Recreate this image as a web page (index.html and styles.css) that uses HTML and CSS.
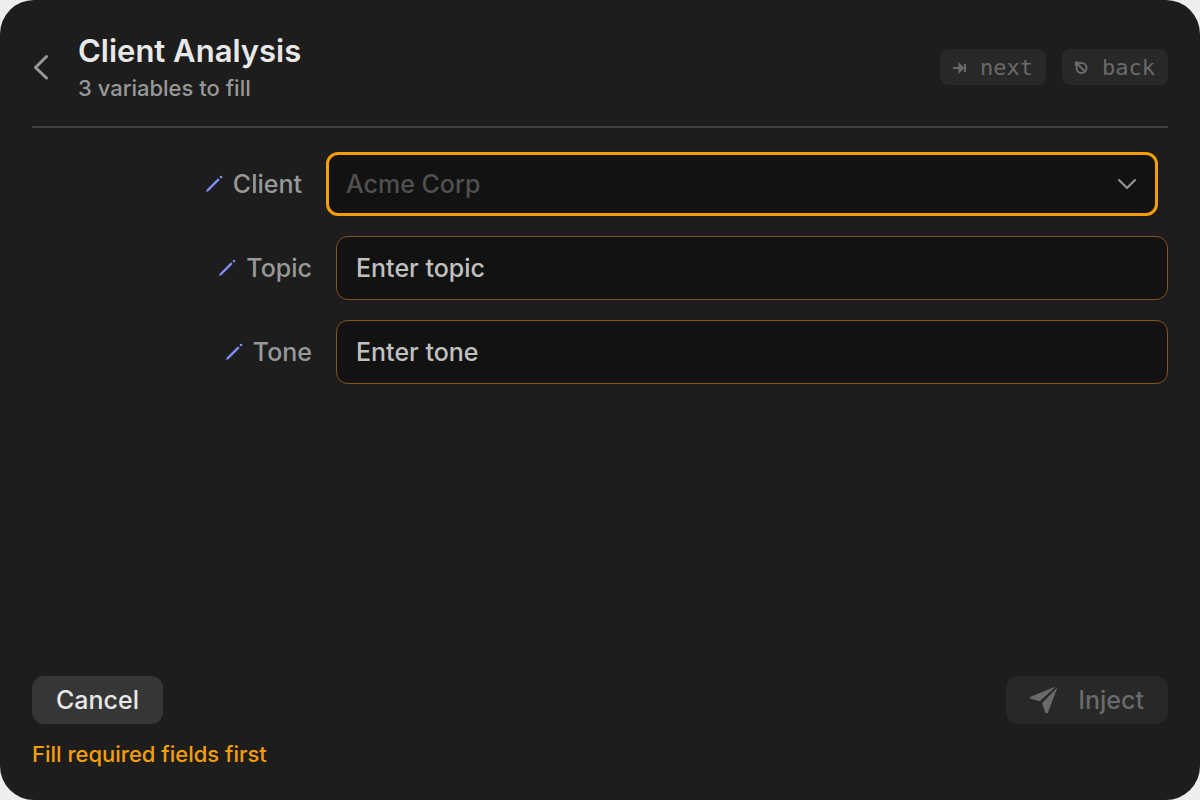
FILE: index.html
```html
<!DOCTYPE html>
<html lang="en">
<head>
  <meta charset="UTF-8">
  <meta name="viewport" content="width=device-width, initial-scale=1">
  <title>Client Analysis</title>
  <link rel="stylesheet" href="styles.css">
</head>
<body>
  <form class="panel">
    <header class="header">
      <button type="button" class="back" aria-label="Back">
        <svg width="18" height="28" viewBox="0 0 18 28"><path d="M14.500 3.500L3.500 14.500l11 10.500"/></svg>
      </button>
      <div class="heading">
        <h1>Client Analysis</h1>
        <p>3 variables to fill</p>
      </div>
      <div class="hints">
        <span class="hint">
          <svg width="13" height="14" viewBox="0 0 13 14"><path d="M0 8h10M6.500 4.500L10 8l-3.500 3.500zM12 4v8"/></svg>
          next
        </span>
        <span class="hint">
          <svg width="13" height="14" viewBox="0 0 13 14"><circle cx="6.500" cy="8" r="5"/><path d="M1 2.500l9 9M1 6V2.500h3"/></svg>
          back
        </span>
      </div>
    </header>

    <main class="fields">
      <div class="row active">
        <label for="client">
          <svg class="pencil" width="18" height="18" viewBox="0 0 18 18"><path d="M1 17l1-2.700L13 3.300 14.700 5 3.700 16z"/><circle cx="16" cy="2" r="1.300"/></svg>
          Client
        </label>
        <div class="dropdown">
          <select id="client">
            <option>Acme Corp</option>
          </select>
          <svg class="chevron" width="20" height="12" viewBox="0 0 20 12"><path d="M2 2l8 8 8-8"/></svg>
        </div>
      </div>
      <div class="row">
        <label for="topic">
          <svg class="pencil" width="18" height="18" viewBox="0 0 18 18"><path d="M1 17l1-2.700L13 3.300 14.700 5 3.700 16z"/><circle cx="16" cy="2" r="1.300"/></svg>
          Topic
        </label>
        <input type="text" id="topic" placeholder="Enter topic">
      </div>
      <div class="row">
        <label for="tone">
          <svg class="pencil" width="18" height="18" viewBox="0 0 18 18"><path d="M1 17l1-2.700L13 3.300 14.700 5 3.700 16z"/><circle cx="16" cy="2" r="1.300"/></svg>
          Tone
        </label>
        <input type="text" id="tone" placeholder="Enter tone">
      </div>
    </main>

    <footer class="footer">
      <div class="actions">
        <button type="button" class="btn">Cancel</button>
        <button type="submit" class="btn inject" disabled>
          <svg width="28" height="28" viewBox="0 0 28 28"><path d="M0.500 10.800L25.800 0.500 9.800 15.300 1.200 13Q-0.500 11.800 0.500 10.800z"/><path d="M27.500 1.300L18 26.500Q16.500 28.200 15.300 26.500L12 17.300z"/></svg>
          Inject
        </button>
      </div>
      <p class="warning">Fill required fields first</p>
    </footer>
  </form>
</body>
</html>
```

FILE: styles.css
```css
* {
  box-sizing: border-box;
}
body {
  margin: 0;
  background: #eeeeee;
  font-family: Inter, "Liberation Sans", sans-serif;
  font-weight: 500;
  color: #e8e8e8;
}
h1, p {
  margin: 0;
}
button, input, select {
  font-family: inherit;
  font-weight: inherit;
}
.panel {
  display: flex;
  flex-direction: column;
  min-height: 100vh;
  padding: 32px;
  background: #1d1d1d;
  border-radius: 34px;
}

/* Header */
.header {
  display: flex;
  align-items: center;
  padding-bottom: 24px;
  border-bottom: 2px solid #404040;
}
.back {
  display: flex;
  padding: 0;
  margin-right: 28px;
  border: none;
  background: none;
  cursor: pointer;
}
.back svg {
  fill: none;
  stroke: #989898;
  stroke-width: 3;
  stroke-linecap: round;
  stroke-linejoin: round;
}
.heading {
  flex: 1;
}
.heading h1 {
  font-size: 31px;
  font-weight: 600;
  line-height: 38px;
}
.heading p {
  margin-top: 4px;
  font-size: 22px;
  line-height: 28px;
  color: #989898;
}
.hints {
  display: flex;
  gap: 16px;
}
.hint {
  display: flex;
  align-items: center;
  gap: 14px;
  height: 36px;
  padding: 0 13px;
  border-radius: 8px;
  background: #282828;
  color: #6a6a6a;
  font-family: "DejaVu Sans Mono", monospace;
  font-size: 22px;
}
.hint svg {
  fill: none;
  stroke: currentColor;
  stroke-width: 2;
}

/* Fields */
.fields {
  display: flex;
  flex: 1;
  flex-direction: column;
  gap: 20px;
  padding-top: 24px;
}
.row {
  display: grid;
  grid-template-columns: 280px 1fr;
  gap: 24px;
  align-items: center;
}
.row.active {
  margin: 0 10px 0 -10px;
}
label {
  display: flex;
  align-items: center;
  justify-content: flex-end;
  gap: 10px;
  font-size: 25px;
  color: #989898;
}
.pencil {
  fill: #818cf8;
}
input, select {
  width: 100%;
  height: 64px;
  padding: 0 19px;
  border: 1px solid #83561a;
  border-radius: 12px;
  outline: none;
  background: #121212;
  color: #e8e8e8;
  font-size: 25px;
}
input::placeholder {
  color: #c0c0c0;
  opacity: 1;
}
.dropdown {
  position: relative;
}
.dropdown select {
  padding: 0 17px;
  border: 3px solid #f59e0b;
  color: #505050;
  appearance: none;
}
.chevron {
  position: absolute;
  top: 26px;
  right: 21px;
  fill: none;
  stroke: #989898;
  stroke-width: 2;
  stroke-linecap: round;
  stroke-linejoin: round;
  pointer-events: none;
}

/* Footer */
.actions {
  display: flex;
  align-items: center;
  justify-content: space-between;
}
.btn {
  display: flex;
  align-items: center;
  gap: 20px;
  height: 48px;
  padding: 0 24px;
  border: none;
  border-radius: 12px;
  background: #363636;
  color: #e8e8e8;
  font-size: 25px;
}
.btn.inject {
  background: #282828;
  color: #6a6a6a;
}
.btn svg {
  fill: currentColor;
}
.warning {
  margin-top: 16px;
  font-size: 22px;
  line-height: 28px;
  color: #f59e0b;
}
```
